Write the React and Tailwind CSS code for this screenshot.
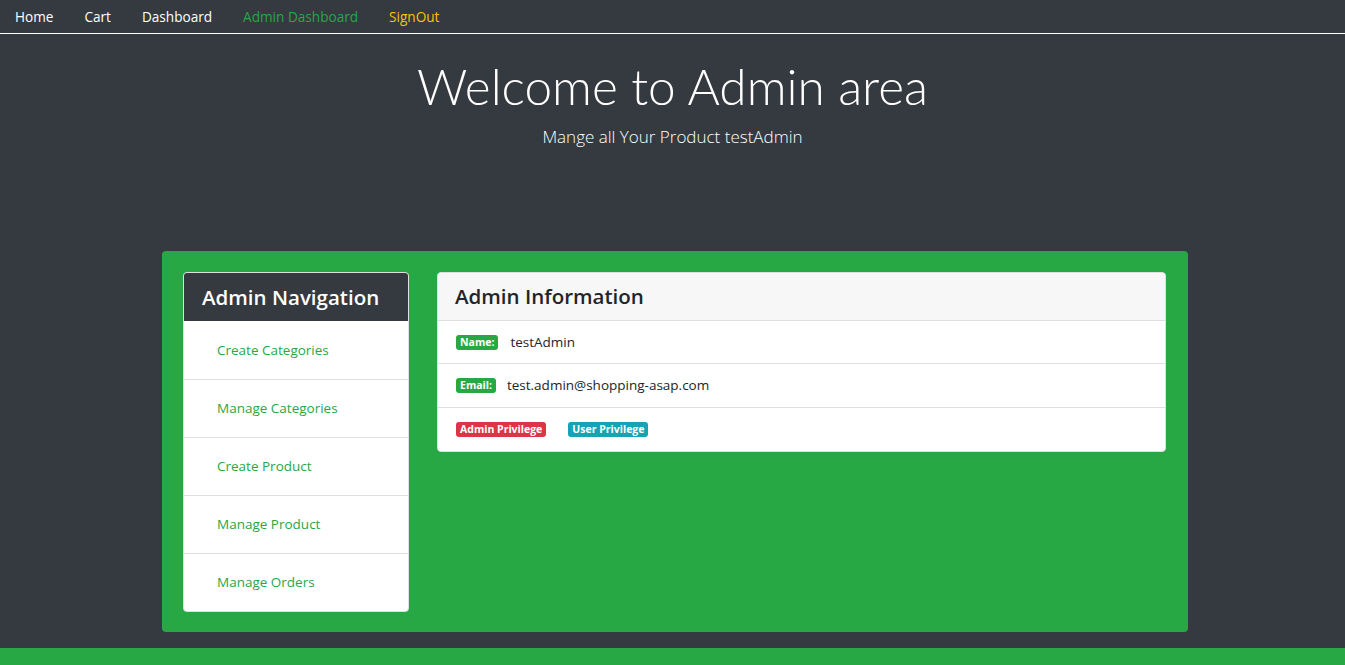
import React from "react";

const navLinks = [
  { label: "Home", cls: "text-white" },
  { label: "Cart", cls: "text-white" },
  { label: "Dashboard", cls: "text-white" },
  { label: "Admin Dashboard", cls: "text-[#28a745]" },
  { label: "SignOut", cls: "text-[#ffc107]" },
];

const adminLinks = [
  "Create Categories",
  "Manage Categories",
  "Create Product",
  "Manage Product",
  "Manage Orders",
];

function App() {
  return (
    <div className="min-h-[665px] bg-[#343a40] font-['Open_Sans',sans-serif] flex flex-col">
      <nav className="flex h-[34px] items-center pt-[1px] border-b border-white">
        {navLinks.map((l, i) => (
          <a key={l.label} className={`text-[13.6px] ${l.cls} ${i === 0 ? "pl-[15px]" : "pl-[31px]"}`}>
            {l.label}
          </a>
        ))}
      </nav>

      <div className="flex flex-col items-center pt-[20px] h-[217px]">
        <h1 className="text-[49.5px] font-light text-white leading-[64px] font-['Lato',sans-serif]">Welcome to Admin area</h1>
        <p className="text-[17px] font-light text-white mt-[6px]">Mange all Your Product testAdmin</p>
      </div>

      <div className="ml-[162px] w-[1026px] h-[381px] bg-[#28a745] rounded-[4px] p-[21px] flex gap-[28px] items-start">
        <div className="w-[226px] bg-white border border-[#dfdfdf] rounded-[4px] overflow-hidden">
          <div className="bg-[#343a40] h-[48px] flex items-center pl-[18px]">
            <h2 className="text-white text-[20.5px] font-semibold">Admin Navigation</h2>
          </div>
          {adminLinks.map((t, i) => (
            <div
              key={t}
              className={`h-[58px] flex items-center pl-[33px] text-[13.5px] text-[#28a745] ${i > 0 ? "border-t border-[#dfdfdf]" : ""}`}
            >
              {t}
            </div>
          ))}
        </div>

        <div className="w-[729px] bg-white border border-[#dfdfdf] rounded-[4px] overflow-hidden">
          <div className="bg-[#f7f7f7] h-[48px] flex items-center pl-[17px] border-b border-[#dfdfdf]">
            <h2 className="text-[#212529] text-[20.5px] font-semibold">Admin Information</h2>
          </div>
          <div className="h-[43px] flex items-center pl-[18px] border-b border-[#dfdfdf]">
            <span className="bg-[#28a745] text-white text-[10.5px] font-bold rounded-[3px] px-[4px] leading-[15px]">Name:</span>
            <span className="ml-[12px] text-[13.5px] text-[#212529]">testAdmin</span>
          </div>
          <div className="h-[44px] flex items-center pl-[18px] border-b border-[#dfdfdf]">
            <span className="bg-[#28a745] text-white text-[10.5px] font-bold rounded-[3px] px-[4px] leading-[15px]">Email:</span>
            <span className="ml-[11px] text-[13.5px] text-[#212529]">test.admin@shopping-asap.com</span>
          </div>
          <div className="h-[43px] flex items-center pl-[18px]">
            <span className="bg-[#dc3545] text-white text-[10.5px] font-bold rounded-[3px] px-[4px] leading-[15px]">Admin Privilege</span>
            <span className="ml-[22px] bg-[#17a2b8] text-white text-[10.5px] font-bold rounded-[3px] px-[4px] leading-[15px]">User Privilege</span>
          </div>
        </div>
      </div>

      <div className="mt-[16px] bg-[#28a745] flex-1 min-h-[17px]"></div>
    </div>
  );
}

export default App;
